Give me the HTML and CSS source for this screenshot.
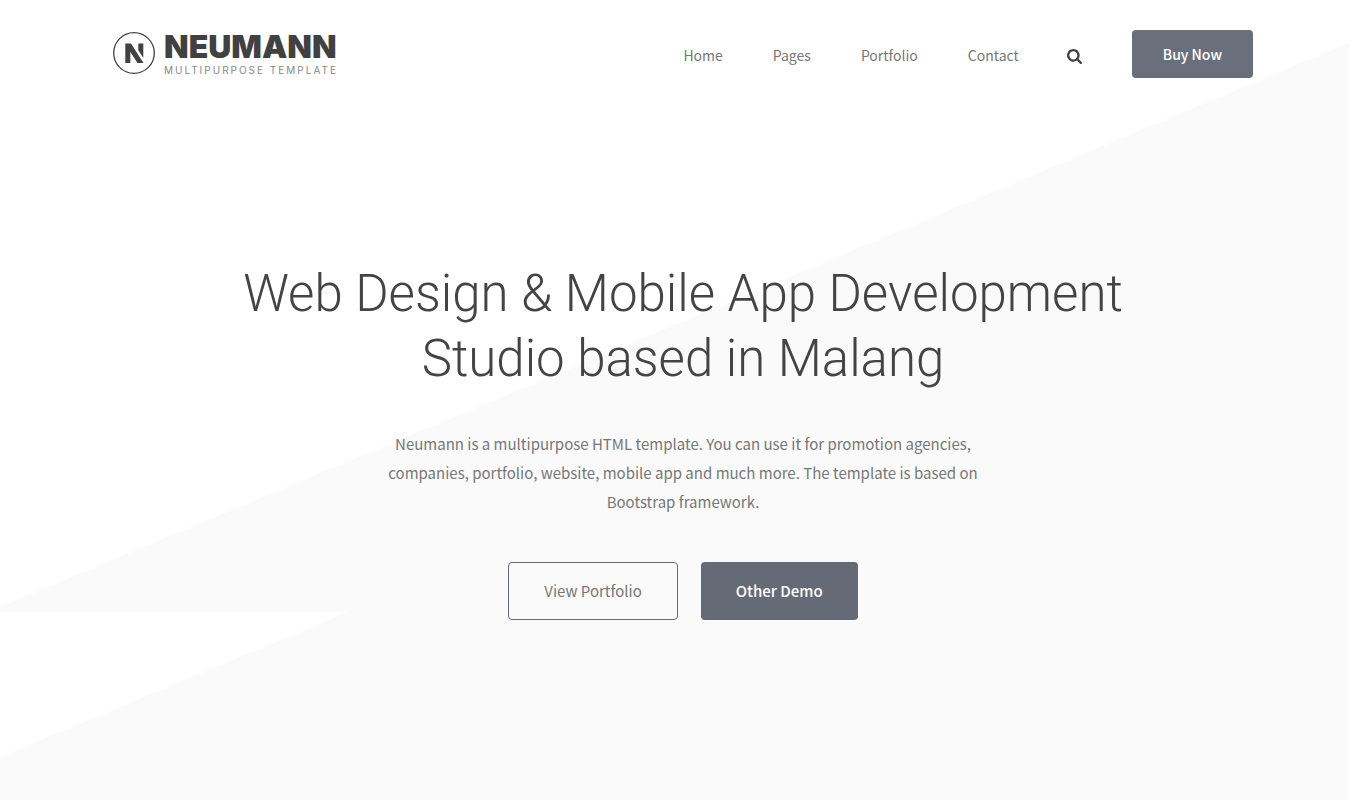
FILE: index.html
```html
<!DOCTYPE html>
<html lang="en">
<head>
<meta charset="utf-8">
<meta name="viewport" content="width=device-width, initial-scale=1">
<title>Neumann - Multipurpose Template</title>
<link rel="stylesheet" href="styles.css">
</head>
<body>
<div class="page">
  <svg class="backdrop" viewBox="0 0 1349 800" preserveAspectRatio="none" aria-hidden="true">
    <path d="M0 607L1349 43V800H0V757L348 612H0Z" fill="#fafafa"/>
  </svg>
  <header class="header container">
    <a class="brand" href="#">
      <svg class="brand-mark" viewBox="0 0 42 42" aria-hidden="true">
        <circle cx="21" cy="21" r="20.3" fill="none" stroke="#414141" stroke-width="1.3"/>
        <path d="M12.300 11.500H18L30.500 31H24.500L17.300 20V31H12.300ZM25.300 11.500H30.300V26L25.300 18.300Z" fill="#414141"/>
      </svg>
      <span class="brand-text">
        <span class="brand-name">NEUMANN</span>
        <span class="brand-tagline">MULTIPURPOSE TEMPLATE</span>
      </span>
    </a>
    <nav class="nav" aria-label="Main">
      <a class="nav-link" href="#">Home</a>
      <a class="nav-link" href="#">Pages</a>
      <a class="nav-link" href="#">Portfolio</a>
      <a class="nav-link" href="#">Contact</a>
      <button class="search" type="button" aria-label="Search">
        <svg class="search-icon" viewBox="0 0 1664 1664" aria-hidden="true"><path fill="currentColor" d="M1152 704q0-185-131.500-316.500T704 256 387.500 387.500 256 704t131.500 316.500T704 1152t316.500-131.500T1152 704zm512 832q0 52-38 90t-90 38q-54 0-90-38l-343-342q-179 124-399 124-143 0-273.500-55.500t-225-150-150-225T0 704t55.500-273.500 150-225 225-150T704 0t273.500 55.500 225 150 150 225T1408 704q0 220-124 399l343 343q37 37 37 90z"/></svg>
      </button>
      <a class="button button-small" href="#">Buy Now</a>
    </nav>
  </header>
  <main class="hero container">
    <h1 class="hero-title">Web Design &amp; Mobile App Development<br>Studio based in Malang</h1>
    <p class="hero-text">Neumann is a multipurpose HTML template. You can use it for promotion agencies, companies, portfolio, website, mobile app and much more. The template is based on Bootstrap framework.</p>
    <div class="hero-actions">
      <a class="button button-outline" href="#">View Portfolio</a>
      <a class="button button-solid" href="#">Other Demo</a>
    </div>
  </main>
</div>
</body>
</html>
```
FILE: styles.css
```css
* {
  box-sizing: border-box;
}

body {
  margin: 0;
  background: #fff;
  color: #777;
  font-family: "Source Sans Pro", "Noto Sans CJK SC", sans-serif;
  font-size: 15px;
}

a {
  color: inherit;
  text-decoration: none;
}

.page {
  position: relative;
  min-height: 100vh;
}

.backdrop {
  position: absolute;
  inset: 0;
  z-index: -1;
  width: calc(100% - 17px);
  height: 100%;
}

.container {
  max-width: 1140px;
  margin: 0 auto;
}

.header {
  display: flex;
  justify-content: space-between;
  align-items: flex-start;
  padding-top: 30px;
}

.brand {
  display: flex;
  align-items: flex-start;
  gap: 9px;
  padding-top: 2px;
  color: #414141;
}

.brand-mark {
  width: 42px;
  height: 42px;
}

.brand-text {
  display: flex;
  flex-direction: column;
}

.brand-name {
  font: 900 32px/30px Inter, sans-serif;
}

.brand-tagline {
  color: #888;
  font: 400 10px/16px Inter, sans-serif;
  letter-spacing: 2px;
}

.nav {
  display: flex;
  align-items: center;
  gap: 50px;
  font-size: 14px;
}

.nav-link {
  padding-top: 2px;
  line-height: 24px;
}

.search {
  display: flex;
  margin: 5px 0 0 -2px;
  padding: 0;
  border: 0;
  background: none;
  color: #414141;
}

.search-icon {
  width: 15px;
  height: 15px;
}

.button {
  display: block;
  border-radius: 4px;
  color: #fff;
  font-weight: 500;
  text-align: center;
}

.button-small {
  padding: 0 31px;
  background: #69707b;
  line-height: 48px;
}

.hero {
  display: flex;
  flex-direction: column;
  align-items: center;
  padding: 183px 0 100px;
  text-align: center;
}

.hero-title {
  margin: 0;
  color: #444;
  font: 300 51px/65px "Roboto Slab", Roboto, sans-serif;
}

.hero-text {
  max-width: 600px;
  margin: 38px 0 46px;
  line-height: 29px;
}

.hero-actions {
  display: flex;
  gap: 23px;
}

.button-outline {
  padding: 0 35px;
  border: 1px solid #646a76;
  color: #777;
  font-weight: 400;
  line-height: 56px;
}

.button-solid {
  padding: 0 35px;
  background: #646a76;
  line-height: 58px;
}
```
